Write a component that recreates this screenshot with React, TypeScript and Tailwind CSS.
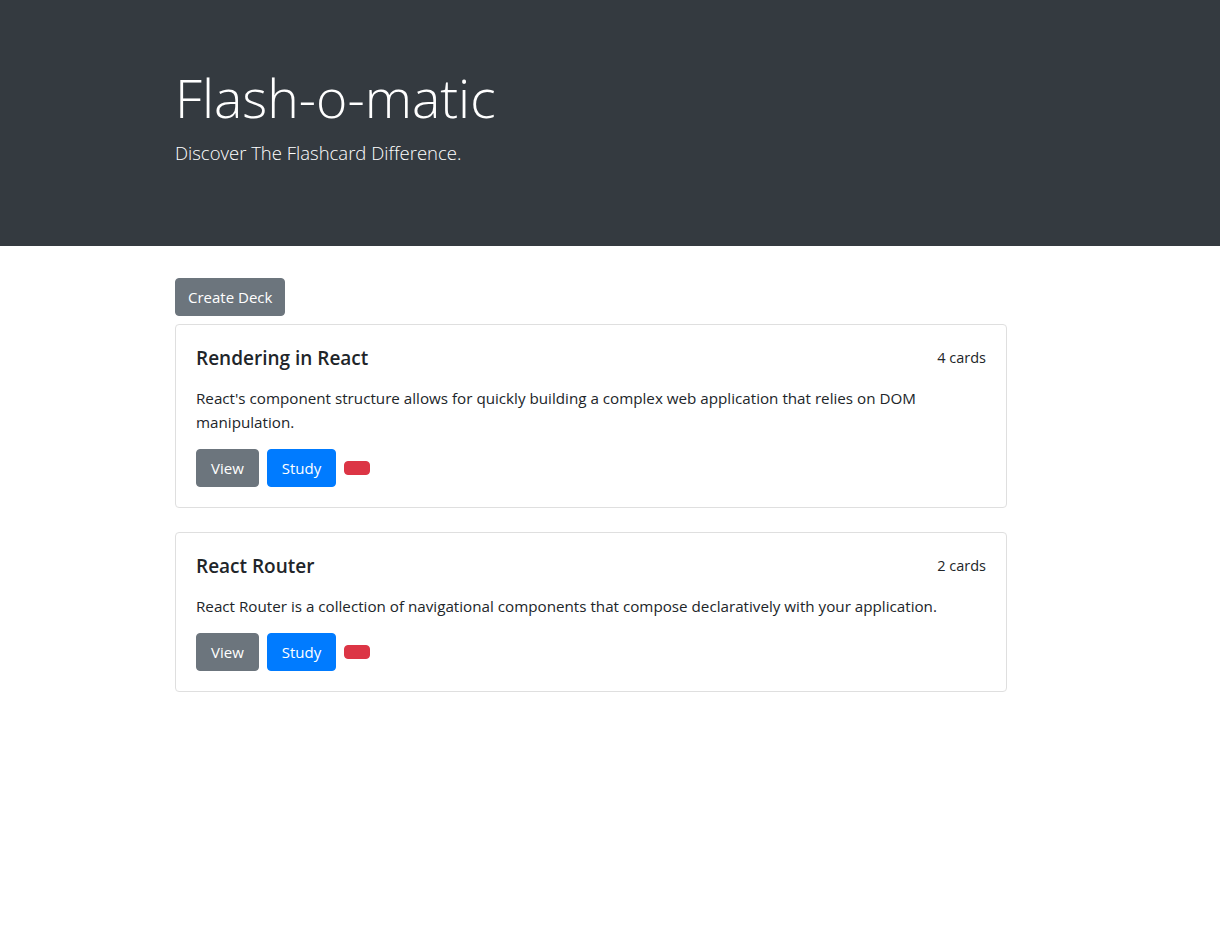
import React from "react";

type Deck = {
    id: number;
    name: string;
    description: string;
    cards: number;
};

const decks: Deck[] = [
    {
        id: 1,
        name: "Rendering in React",
        description:
            "React's component structure allows for quickly building a complex web application that relies on DOM manipulation.",
        cards: 4,
    },
    {
        id: 2,
        name: "React Router",
        description:
            "React Router is a collection of navigational components that compose declaratively with your application.",
        cards: 2,
    },
];

const DeckCard = ({ deck }: { deck: Deck }) => (
    <div className="mb-6 rounded border border-[#dfdfdf] bg-white p-5">
        <div className="flex items-start justify-between">
            <h5 className="mb-[15px] text-[19px] leading-[26px] font-semibold text-[#212529]">{deck.name}</h5>
            <small className="pt-[3px] text-[14.5px] leading-[20px] text-[#212529]">{deck.cards} cards</small>
        </div>
        <p className="mb-[15px] text-[15.2px] leading-[24px] text-[#212529]">{deck.description}</p>
        <div className="flex items-center gap-2">
            <button className="h-[38px] rounded border border-[#6c757d] bg-[#6c757d] px-[14px] text-[15px] text-white">View</button>
            <button className="h-[38px] rounded border border-[#007bff] bg-[#007bff] px-[14px] text-[15px] text-white">Study</button>
            <button className="h-[14px] w-[26px] rounded border border-[#dc3545] bg-[#dc3545]"></button>
        </div>
    </div>
);

export default function App() {
    return (
        <div className="min-h-[933px] bg-white font-['Segoe_UI','Open_Sans','Noto_Sans',sans-serif] text-[#212529]">
            <div className="h-[246px] bg-[#343a40] pt-16 pl-[175px] text-white">
                <h1 className="mb-2 text-[53.5px] leading-[67px] font-light">Flash-o-matic</h1>
                <p className="text-[18.5px] leading-[28px] font-light">Discover The Flashcard Difference.</p>
            </div>
            <div className="w-[1007px] pt-8 pl-[175px]">
                <button className="mb-2 h-[38px] rounded border border-[#6c757d] bg-[#6c757d] px-3 text-[15px] text-white">
                    Create Deck
                </button>
                {decks.map((deck) => (
                    <DeckCard key={deck.id} deck={deck} />
                ))}
            </div>
        </div>
    );
}
